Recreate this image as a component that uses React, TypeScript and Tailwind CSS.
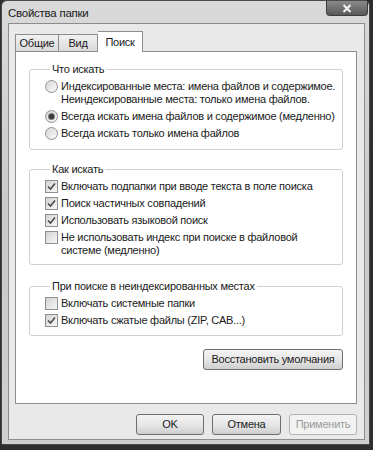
import React from 'react';

function Radio({ checked }: { checked?: boolean }) {
  return (
    <span className="flex h-[13px] w-[13px] shrink-0 items-center justify-center rounded-full border border-[#8f8f8f] bg-gradient-to-br from-[#d6d6d6] to-[#fbfbfb]">
      {checked && <span className="h-[5px] w-[5px] rounded-full bg-[#3a3a3a] shadow-[0_0_0_1px_#7a7a7a]" />}
    </span>
  );
}

function Check({ checked }: { checked?: boolean }) {
  return (
    <span className="flex h-[13px] w-[13px] shrink-0 items-center justify-center border border-[#8f8f8f] bg-gradient-to-br from-[#d2d2d2] to-[#f8f8f8]">
      {checked && (
        <svg width="9" height="9" viewBox="0 0 9 9">
          <path d="M1 4.5 L3.5 7 L8 1.5" fill="none" stroke="#4a4a4a" strokeWidth="1.6" />
        </svg>
      )}
    </span>
  );
}

function Row({ control, children }: { control: React.ReactNode; children: React.ReactNode }) {
  return (
    <div className="flex items-start gap-[3px]">
      {control}
      <span className="whitespace-nowrap leading-[13px]">{children}</span>
    </div>
  );
}

function Group({ title, children, className = '' }: { title: string; children: React.ReactNode; className?: string }) {
  return (
    <fieldset className={`rounded-[3px] border border-[#d0d0d0] pl-[15px] pt-[4px] ${className}`}>
      <legend className="ml-[5px] px-[2px] leading-[14px]">{title}</legend>
      <div className="flex flex-col gap-[4px]">{children}</div>
    </fieldset>
  );
}

function Btn({ children, disabled, className = '' }: { children: React.ReactNode; disabled?: boolean; className?: string }) {
  return (
    <button
      className={`flex h-[21px] items-center justify-center rounded-[3px] border ${
        disabled
          ? 'border-[#b4b4b4] bg-[#f2f2f2] text-[#9a9a9a]'
          : 'border-[#6e6e6e] bg-gradient-to-b from-[#f4f4f4] via-[#e6e6e6] to-[#cfcfcf] text-[#1a1a1a]'
      } ${className}`}
    >
      {children}
    </button>
  );
}

export default function App() {
  return (
    <div className="h-[450px] w-[373px] overflow-hidden bg-[#2e2e2e] font-['Liberation_Sans',Arial,sans-serif] text-[11px] tracking-[-0.25px] text-[#1a1a1a]">
      <div className="ml-[1px] flex h-[445px] w-[369px] flex-col rounded-t-[6px] border border-[#4a4a4a] bg-gradient-to-b from-[#d9d9d9] via-[#c9c9c9] to-[#cfcfcf]">
        {/* title bar */}
        <div className="flex h-[22px] shrink-0 items-start justify-between">
          <span className="pl-[6px] pt-[5px] text-[11.5px] leading-[14px] text-[#202020]">Свойства папки</span>
          <span className="mr-[1px] flex h-[15px] w-[42px] items-center justify-center rounded-b-[4px] border border-t-0 border-[#3c3c3c] bg-gradient-to-b from-[#8a8a8a] to-[#5a5a5a]">
            <svg width="10" height="9" viewBox="0 0 10 9">
              <path d="M1.5 1 L8.5 8 M8.5 1 L1.5 8" stroke="#f4f4f4" strokeWidth="2" />
            </svg>
          </span>
        </div>

        {/* client area */}
        <div className="mb-[4px] ml-[6px] mr-[4px] flex flex-1 flex-col border border-[#8c8c8c] bg-[#e9e9e9] pl-[6px] pr-[7px] pt-[7px]">
          {/* tabs */}
          <div className="flex h-[20px] items-end">
            <div className="flex h-[17px] w-[44px] items-center justify-center border border-b-0 border-[#8d8d8d] bg-gradient-to-b from-[#f2f2f2] to-[#dadada]">Общие</div>
            <div className="flex h-[17px] w-[39px] items-center justify-center border border-b-0 border-l-0 border-[#8d8d8d] bg-gradient-to-b from-[#f2f2f2] to-[#dadada]">Вид</div>
            <div className="relative z-10 -mb-px flex h-[21px] w-[45px] items-start justify-center border border-b-0 border-l-0 border-[#8d8d8d] bg-white pt-[2px]">Поиск</div>
          </div>

          {/* panel */}
          <div className="flex h-[353px] flex-col border border-[#8d8d8d] bg-white px-[13px] pt-[10px]">
            <Group title="Что искать" className="pb-[9px]">
              <Row control={<Radio />}>
                Индексированные места: имена файлов и содержимое.
                <br />
                Неиндексированные места: только имена файлов.
              </Row>
              <Row control={<Radio checked />}>Всегда искать имена файлов и содержимое (медленно)</Row>
              <Row control={<Radio />}>Всегда искать только имена файлов</Row>
            </Group>

            <Group title="Как искать" className="mt-[12px] pb-[7px]">
              <Row control={<Check checked />}>Включать подпапки при вводе текста в поле поиска</Row>
              <Row control={<Check checked />}>Поиск частичных совпадений</Row>
              <Row control={<Check checked />}>Использовать языковой поиск</Row>
              <Row control={<Check />}>
                Не использовать индекс при поиске в файловой
                <br />
                системе (медленно)
              </Row>
            </Group>

            <Group title="При поиске в неиндексированных местах" className="mt-[14px] pb-[8px]">
              <Row control={<Check />}>Включать системные папки</Row>
              <Row control={<Check checked />}>Включать сжатые файлы (ZIP, CAB...)</Row>
            </Group>

            <div className="mt-[13px] flex justify-end">
              <Btn className="w-[140px]">Восстановить умолчания</Btn>
            </div>
          </div>

          {/* dialog buttons */}
          <div className="mt-[10px] flex justify-end gap-[8px]">
            <Btn className="w-[68px]">OK</Btn>
            <Btn className="w-[69px]">Отмена</Btn>
            <Btn className="w-[68px]" disabled>Применить</Btn>
          </div>
        </div>
      </div>
    </div>
  );
}
